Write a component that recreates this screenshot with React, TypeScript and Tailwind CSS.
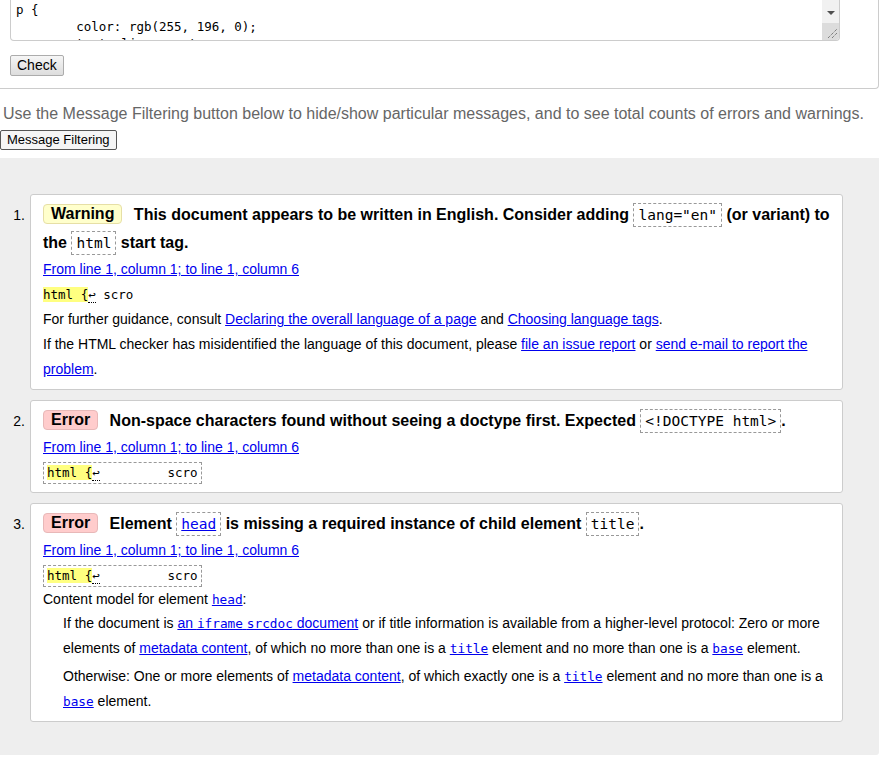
import React from "react";

const MONO = "font-['DejaVu_Sans_Mono',monospace]";

function A({ children }: { children: React.ReactNode }) {
  return <a className="text-[#0000ee] underline cursor-pointer">{children}</a>;
}

function HCode({ children }: { children: React.ReactNode }) {
  return (
    <code
      className={`${MONO} font-normal text-[14.5px] border border-dashed border-[#999] px-[4px] py-[3px]`}
    >
      {children}
    </code>
  );
}

function Badge({ kind }: { kind: "Warning" | "Error" }) {
  const cls =
    kind === "Warning"
      ? "bg-[#ffffcc] border-[#e6dfa6]"
      : "bg-[#ffcccc] border-[#e8b8b8]";
  return (
    <span
      className={`inline-block ${cls} border rounded-[4px] px-[7px] leading-[18px] mr-[7px] align-[1px]`}
    >
      {kind}
    </span>
  );
}

function Extract({ boxed }: { boxed: boolean }) {
  const inner = (
    <>
      <span className="bg-[#ffff80]">html {"{"}</span>
      <span className="border-b border-dotted border-black">↩</span>
      <span>{boxed ? "         scro" : " scro"}</span>
    </>
  );
  return (
    <div className="h-[25px] flex items-center">
      <code
        className={`${MONO} text-[12.5px] leading-[16px] whitespace-pre ${
          boxed ? "border border-dashed border-[#999] px-[3px] py-[2px]" : ""
        }`}
      >
        {inner}
      </code>
    </div>
  );
}

function Item({ n, children }: { n: number; children: React.ReactNode }) {
  return (
    <div className="flex">
      <div className="w-[30px] text-right pr-[5px] pt-[7px] leading-[28px] text-[14px]">{n}.</div>
      <div className="w-[813px] bg-white border border-[#ccc] rounded-[3px] px-[12px] pt-[6px] pb-[7px] text-[14px]">
        {children}
      </div>
    </div>
  );
}

function Loc() {
  return (
    <div className="leading-[25px]">
      <A>From line 1, column 1; to line 1, column 6</A>
    </div>
  );
}

export default function App() {
  return (
    <div className="font-['Liberation_Sans',Arial,sans-serif] text-black bg-white w-[891px] h-[768px] overflow-hidden">
      {/* top form box */}
      <div className="w-[879px] border-r border-b border-[#ccc] rounded-br-[4px] pb-[11px]">
        <div className="ml-[10px] w-[830px] h-[41px] border-x border-b border-[#ccc] rounded-b-[4px] overflow-hidden flex bg-white">
          <div className={`flex-1 ${MONO} text-[12.5px] leading-[17px] whitespace-pre [tab-size:8] pl-[5px] pt-[1px]`}>
            <div>p {"{"}</div>
            <div>{"\tcolor: rgb(255, 196, 0);"}</div>
            <div>{"\ttext-align: center;"}</div>
          </div>
          <div className="w-[17px] flex flex-col">
            <div className="h-[23px] bg-[#f1f1f1] flex items-center justify-center pt-[3px]">
              <div className="w-0 h-0 border-l-[4px] border-r-[4px] border-t-[4px] border-l-transparent border-r-transparent border-t-[#505050]" />
            </div>
            <div className="flex-1 bg-[#dcdcdc] relative">
              <svg className="absolute right-[2px] bottom-[2px]" width="10" height="10" viewBox="0 0 10 10">
                <line x1="1" y1="10" x2="10" y2="1" stroke="#555" strokeWidth="1" strokeDasharray="1 1" />
                <line x1="5" y1="10" x2="10" y2="5" stroke="#555" strokeWidth="1" strokeDasharray="1 1" />
              </svg>
            </div>
          </div>
        </div>
        <div className="mt-[12px] ml-[10px]">
          <button className="h-[21px] px-[6px] text-[14px] leading-[19px] border border-[#acacac] rounded-[2px] bg-gradient-to-b from-[#f6f6f6] to-[#dddddd] text-black">
            Check
          </button>
        </div>
      </div>

      <p className="mt-[16px] pl-[3px] text-[16px] leading-[18px] text-[#666]">
        Use the Message Filtering button below to hide/show particular messages, and to see total counts of errors and warnings.
      </p>
      <div className="mt-[7px] flex">
        <button className="h-[20px] px-[6px] text-[13px] leading-[18px] border border-[#555] rounded-[2px] bg-[#f5f5f5] text-black">
          Message Filtering
        </button>
      </div>

      {/* results */}
      <div className="mt-[8px] w-[879px] bg-[#eeeeee] rounded-br-[3px] pt-[36px] pb-[33px] flex flex-col gap-[10px]">
        <Item n={1}>
          <div className="font-bold text-[16px] leading-[28px]">
            <Badge kind="Warning" /> This document appears to be written in English. Consider adding{" "}
            <HCode>lang="en"</HCode> (or variant) to the <HCode>html</HCode> start tag.
          </div>
          <Loc />
          <Extract boxed={false} />
          <div className="leading-[25px]">
            For further guidance, consult <A>Declaring the overall language of a page</A> and{" "}
            <A>Choosing language tags</A>.
          </div>
          <div className="leading-[25px]">
            If the HTML checker has misidentified the language of this document, please <A>file an issue report</A> or{" "}
            <A>send e-mail to report the problem</A>.
          </div>
        </Item>

        <Item n={2}>
          <div className="font-bold text-[16px] leading-[28px]">
            <Badge kind="Error" /> Non-space characters found without seeing a doctype first. Expected{" "}
            <HCode>&lt;!DOCTYPE html&gt;</HCode>.
          </div>
          <Loc />
          <Extract boxed={true} />
        </Item>

        <Item n={3}>
          <div className="font-bold text-[16px] leading-[28px]">
            <Badge kind="Error" /> Element{" "}
            <HCode>
              <A>head</A>
            </HCode>{" "}
            is missing a required instance of child element <HCode>title</HCode>.
          </div>
          <Loc />
          <Extract boxed={true} />
          <div className="leading-[23px]">
            Content model for element{" "}
            <A>
              <code className={`${MONO} text-[12.75px]`}>head</code>
            </A>
            :
          </div>
          <div className="ml-[20px]">
            <p className="leading-[25px]">
              If the document is{" "}
              <A>
                an <code className={`${MONO} text-[12.75px]`}>iframe</code>{" "}
                <code className={`${MONO} text-[12.75px]`}>srcdoc</code> document
              </A>{" "}
              or if title information is available from a higher-level protocol: Zero or more elements of{" "}
              <A>metadata content</A>, of which no more than one is a{" "}
              <A>
                <code className={`${MONO} text-[12.75px]`}>title</code>
              </A>{" "}
              element and no more than one is a{" "}
              <A>
                <code className={`${MONO} text-[12.75px]`}>base</code>
              </A>{" "}
              element.
            </p>
            <p className="leading-[25px] mt-[3px]">
              Otherwise: One or more elements of <A>metadata content</A>, of which exactly one is a{" "}
              <A>
                <code className={`${MONO} text-[12.75px]`}>title</code>
              </A>{" "}
              element and no more than one is a{" "}
              <A>
                <code className={`${MONO} text-[12.75px]`}>base</code>
              </A>{" "}
              element.
            </p>
          </div>
        </Item>
      </div>
    </div>
  );
}
